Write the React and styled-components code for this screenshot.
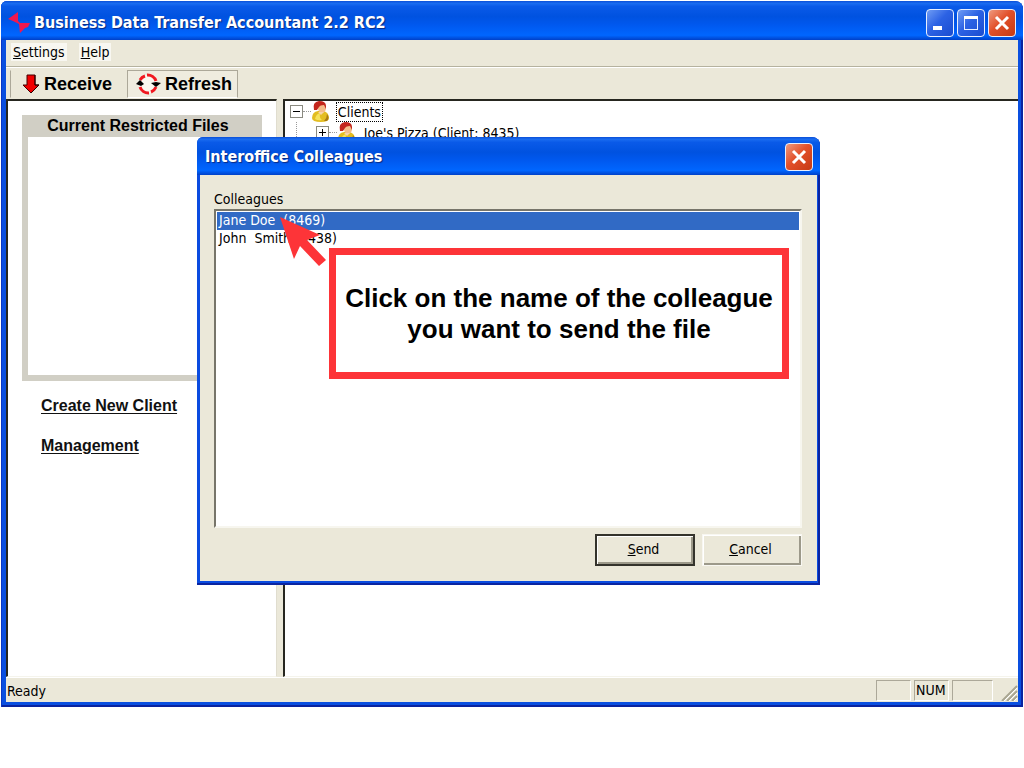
import React, { useState } from "react";
import styled, { createGlobalStyle } from "styled-components";

const colleagues = [
  { id: "8469", name: "Jane Doe\u00a0 (8469)" },
  { id: "8438", name: "John\u00a0 Smith (8438)" },
];

function Logo() {
  return (
    <svg width="22" height="22" viewBox="0 0 22 22" aria-hidden="true">
      <path d="M0 7 L10 0 V9 L12 11 H22 L20 15 L17 16 L12 21 L11 12 L9 11 L5 9 Z" fill="#f0184f" />
    </svg>
  );
}

function CloseIcon() {
  return (
    <svg width="16" height="16" viewBox="0 0 16 16" aria-hidden="true">
      <path d="M2 2 L14 14 M14 2 L2 14" stroke="#fff" strokeWidth="3" />
    </svg>
  );
}

function MinimizeIcon() {
  return (
    <svg width="16" height="16" viewBox="0 0 16 16" aria-hidden="true">
      <rect x="1" y="11" width="9" height="4" fill="#fff" />
    </svg>
  );
}

function MaximizeIcon() {
  return (
    <svg width="16" height="16" viewBox="0 0 16 16" aria-hidden="true">
      <rect x="1.5" y="1.5" width="13" height="13" fill="none" stroke="#e8f0ff" strokeWidth="1" />
      <rect x="1" y="1" width="14" height="3" fill="#fff" />
    </svg>
  );
}

function ReceiveIcon() {
  return (
    <svg width="18" height="22" viewBox="0 0 18 22" aria-hidden="true">
      <path d="M5 2 H13 V12 H17 L9 20 L1 12 H5 Z" fill="#f00000" stroke="#400" strokeWidth="1" />
      <path d="M13 2 V12 H17 L9 20" fill="none" stroke="#200" strokeWidth="1" />
    </svg>
  );
}

function RefreshIcon() {
  return (
    <svg width="25" height="22" viewBox="0 0 25 22" aria-hidden="true">
      <circle cx="12" cy="11" r="9" fill="#faf8f0" />
      <path
        d="M4 7 A9 9 0 0 1 9 3 M11 2 A9 9 0 0 1 20 8 M20 14 A9 9 0 0 1 15 19 M13 20 A9 9 0 0 1 4 14"
        fill="none"
        stroke="#f01820"
        strokeWidth="3"
      />
      <path d="M0 11 L4 7 L8 11 L5 13 Z" fill="#000" />
      <path d="M15 10 L20 9 L25 10 L20 14 Z" fill="#000" />
    </svg>
  );
}

function PersonIcon() {
  return (
    <svg width="19" height="21" viewBox="0 0 19 21" aria-hidden="true">
      <path d="M1 17 Q1 11 7 10 L13 10 Q18 12 18 17 Q18 21 10 21 Q1 21 1 17 Z" fill="#e3bd21" />
      <path d="M4 18 Q5 13 9 12 Q8 17 11 19 Q7 20 4 18 Z" fill="#f6e25a" />
      <path d="M16 13 Q19 17 16 20 L13 20 Q16 17 16 13 Z" fill="#a97b12" />
      <ellipse cx="11" cy="7" rx="4" ry="5" fill="#f4bd8a" />
      <path d="M3 9 Q1 1 8 0 Q15 0 15 5 L15 8 L13 4 Q9 4 8 6 L6 9 Z" fill="#c3261c" />
      <path d="M7 11 L10 14 L13 11 Z" fill="#f7d3a8" />
    </svg>
  );
}

function Expander({ open, label }) {
  return (
    <ExpandButton type="button" aria-label={label}>
      <svg width="11" height="11" viewBox="0 0 11 11" aria-hidden="true">
        <path d={open ? "M2 5.5 H9" : "M2 5.5 H9 M5.5 2 V9"} stroke="#000" strokeWidth="1" />
      </svg>
    </ExpandButton>
  );
}

function Grip() {
  return (
    <svg width="18" height="16" viewBox="0 0 18 16" aria-hidden="true">
      <path d="M2 16 L17 1 M7 16 L17 6 M12 16 L17 11" stroke="#a9a692" strokeWidth="2" />
      <path d="M4 16 L17 3 M9 16 L17 8 M14 16 L17 13" stroke="#fff" strokeWidth="1" />
    </svg>
  );
}

function ColleagueDialog() {
  const [selected, setSelected] = useState("8469");

  return (
    <Dialog role="dialog" aria-labelledby="dialog-title">
      <DialogTitleBar>
        <Title as="h2" id="dialog-title">Interoffice Colleagues</Title>
        <CaptionButton type="button" $danger aria-label="Close dialog"><CloseIcon /></CaptionButton>
      </DialogTitleBar>
      <DialogBody>
        <label htmlFor="colleagues">Colleagues</label>
        <ListWrap>
          <List id="colleagues" size={2} value={selected} onChange={(e) => setSelected(e.target.value)}>
            {colleagues.map((c) => (
              <option key={c.id} value={c.id}>{c.name}</option>
            ))}
          </List>
          <Callout>Click on the name of the colleague you want to send the file</Callout>
          <Pointer width="50" height="54" viewBox="0 0 50 54" aria-hidden="true">
            <path d="M2 4 L42 22 L29 27 L48 47 L41 53 L22 33 L16 46 Z" fill="#fd3438" />
          </Pointer>
        </ListWrap>
        <Actions>
          <PushButton type="button" $primary><u>S</u>end</PushButton>
          <PushButton type="button"><u>C</u>ancel</PushButton>
        </Actions>
      </DialogBody>
    </Dialog>
  );
}

function App() {
  return (
    <>
      <GlobalStyle />
      <Window>
        <TitleBar>
          <Logo />
          <Title>Business Data Transfer Accountant 2.2 RC2</Title>
          <CaptionButtons>
            <CaptionButton type="button" aria-label="Minimize"><MinimizeIcon /></CaptionButton>
            <CaptionButton type="button" aria-label="Maximize"><MaximizeIcon /></CaptionButton>
            <CaptionButton type="button" $danger aria-label="Close"><CloseIcon /></CaptionButton>
          </CaptionButtons>
        </TitleBar>
        <Client>
          <MenuBar>
            <MenuItem type="button"><u>S</u>ettings</MenuItem>
            <MenuItem type="button"><u>H</u>elp</MenuItem>
          </MenuBar>
          <Toolbar>
            <ToolButton type="button"><ReceiveIcon />Receive</ToolButton>
            <ToolButton type="button" $pressed><RefreshIcon />Refresh</ToolButton>
          </Toolbar>
          <Panes>
            <Sidebar>
              <FilesBox>
                <FilesHeading>Current Restricted Files</FilesHeading>
                <FilesArea />
              </FilesBox>
              <SideLinks>
                <a href="#new-client">Create New Client</a>
                <a href="#management">Management</a>
              </SideLinks>
            </Sidebar>
            <TreePane>
              <TreeRow>
                <Expander open label="Collapse Clients" />
                <Branch />
                <PersonIcon />
                <TreeLabel $focused>Clients</TreeLabel>
              </TreeRow>
              <TreeRow>
                <Trunk />
                <Expander label="Expand Joe's Pizza" />
                <Branch />
                <PersonIcon />
                <TreeLabel>Joe's Pizza (Client: 8435)</TreeLabel>
              </TreeRow>
            </TreePane>
          </Panes>
          <StatusBar>
            <StatusText>Ready</StatusText>
            <StatusCell />
            <StatusCell>NUM</StatusCell>
            <StatusCell $wide />
            <GripArea><Grip /></GripArea>
          </StatusBar>
        </Client>
        <ColleagueDialog />
      </Window>
    </>
  );
}

const GlobalStyle = createGlobalStyle`
  * {
    box-sizing: border-box;
  }
  body {
    margin: 0;
    background: #fff;
    color: #000;
    font-family: "DejaVu Sans Condensed", "DejaVu Sans", sans-serif;
    font-size: 14px;
    line-height: 18px;
  }
  button, select {
    font: inherit;
    color: inherit;
  }
  svg {
    display: block;
    flex: none;
  }
`;

const Window = styled.div`
  position: relative;
  display: flex;
  flex-direction: column;
  height: calc(100vh - 62px);
  min-height: 600px;
  margin: 1px 1px 0;
  padding: 0 5px 5px;
  background: #0a4fe0;
  border-radius: 6px 8px 0 0;
  box-shadow: inset 1px 0 #0a36c4, inset -2px -2px #0a24a0;
`;

const TitleBar = styled.header`
  display: flex;
  align-items: center;
  gap: 4px;
  height: 39px;
  margin: 0 -5px;
  padding: 4px 7px 0;
  border-radius: 6px 8px 0 0;
  background: linear-gradient(#0a4fd8 0%, #1a6cf0 6%, #0a5ae8 14%, #0052e0 40%, #0058ee 60%, #0066ff 88%, #0040c8 100%);
`;

const Title = styled.h1`
  flex: 1;
  margin: 0;
  color: #fff;
  font-family: "DejaVu Sans Condensed", "DejaVu Sans", sans-serif;
  font-size: 16px;
  line-height: 22px;
  font-weight: bold;
  text-shadow: 1px 1px 1px #0a2a80;
  white-space: nowrap;
`;

const CaptionButtons = styled.div`
  display: flex;
  gap: 3px;
`;

const CaptionButton = styled.button`
  display: flex;
  align-items: center;
  justify-content: center;
  width: 28px;
  height: 28px;
  padding: 0;
  border: 1px solid #e8effe;
  border-radius: 4px;
  background: ${(p) =>
    p.$danger
      ? "linear-gradient(135deg, #ee9a80, #e2502a 45%, #c63a14)"
      : "linear-gradient(135deg, #6f9cf4, #2c62e4 45%, #1a4cd0)"};
`;

const Client = styled.div`
  flex: 1;
  display: flex;
  flex-direction: column;
  min-height: 0;
  background: #ebe8d9;
`;

const MenuBar = styled.nav`
  display: flex;
  gap: 12px;
  height: 27px;
  padding: 3px 5px;
  border-bottom: 1px solid #b5b29f;
`;

const MenuItem = styled.button`
  height: 18px;
  padding: 0 2px;
  border: 0;
  background: #f8f7f1;
`;

const Toolbar = styled.div`
  display: flex;
  height: 32px;
  padding: 2px 0 1px 4px;
  border-top: 1px solid #fff;
`;

const ToolButton = styled.button`
  display: flex;
  align-items: center;
  gap: 4px;
  padding: 0 ${(p) => (p.$pressed ? "5px" : "14px")} 0 ${(p) => (p.$pressed ? "8px" : "11px")};
  border: 1px solid;
  border-color: ${(p) => (p.$pressed ? "#aca899 #aca899 #fff #aca899" : "transparent transparent transparent #aca899")};
  background: ${(p) => (p.$pressed ? "#efecdf" : "transparent")};
  font-family: "Liberation Sans", Arial, sans-serif;
  font-size: 18px;
  font-weight: bold;
`;

const Panes = styled.main`
  flex: 1;
  display: grid;
  grid-template-columns: 7fr 19fr;
  gap: 6px;
  min-height: 0;
`;

const Pane = styled.section`
  background: #fff;
  border-top: 2px solid #26261f;
  border-left: 2px solid #26261f;
  border-bottom: 1px solid #f5f4ec;
`;

const Sidebar = styled(Pane)`
  padding: 14px 14px 0;
  border-right: 1px solid #e0ddcf;
`;

const TreePane = styled(Pane)`
  padding: 0 5px;
  overflow: hidden;
`;

const FilesBox = styled.div`
  display: flex;
  flex-direction: column;
  height: 266px;
  padding: 0 6px 6px;
  background: #d1cfc5;
`;

const FilesHeading = styled.h2`
  margin: 0;
  padding-right: 8px;
  font-family: "Liberation Sans", Arial, sans-serif;
  font-size: 16px;
  line-height: 22px;
  text-align: center;
  white-space: nowrap;
`;

const FilesArea = styled.div`
  flex: 1;
  background: #fff;
`;

const SideLinks = styled.nav`
  display: flex;
  flex-direction: column;
  align-items: flex-start;
  gap: 20px;
  padding: 15px 19px;
  font-family: "Liberation Sans", Arial, sans-serif;
  font-size: 16px;
  line-height: 20px;
  font-weight: bold;
  a {
    color: #111;
    text-underline-offset: 2px;
  }
`;

const TreeRow = styled.div`
  display: flex;
  align-items: center;
  height: 21px;
`;

const Trunk = styled.span`
  align-self: stretch;
  width: 20px;
  margin-left: 6px;
  border-left: 1px dotted #999;
`;

const ExpandButton = styled.button`
  width: 13px;
  height: 13px;
  padding: 0;
  border: 1px solid #8a8a80;
  background: #fff;
`;

const Branch = styled.span`
  width: 8px;
  border-top: 1px dotted #999;
`;

const TreeLabel = styled.span`
  margin-left: 6px;
  padding: 0 1px;
  border: 1px dotted ${(p) => (p.$focused ? "#000" : "transparent")};
  white-space: nowrap;
`;

const StatusBar = styled.footer`
  display: flex;
  align-items: flex-end;
  gap: 3px;
  height: 25px;
  padding-bottom: 1px;
  border-top: 1px solid #fff;
`;

const StatusText = styled.span`
  flex: 1;
  padding: 0 1px 1px;
`;

const StatusCell = styled.span`
  width: ${(p) => (p.$wide ? "41px" : "35px")};
  height: 21px;
  padding: 0 1px;
  border: 1px solid;
  border-color: #aca899 #fff #fff #aca899;
`;

const GripArea = styled.span`
  padding-left: 4px;
`;

const Dialog = styled.div`
  position: absolute;
  top: 136px;
  left: 196px;
  right: 203px;
  padding: 0 3px 4px;
  background: #0a4be0;
  border-radius: 6px 8px 0 0;
  box-shadow: inset -2px -2px #0a24a0;
`;

const DialogTitleBar = styled(TitleBar)`
  height: 38px;
  margin: 0 -3px;
  padding: 2px 7px 0 8px;
`;

const DialogBody = styled.div`
  padding: 15px 15px 15px 14px;
  background: #ebe8d9;
`;

const ListWrap = styled.div`
  position: relative;
  height: 319px;
  margin-top: 1px;
`;

const List = styled.select`
  display: block;
  width: 100%;
  height: 100%;
  padding: 1px;
  border: 2px solid;
  border-color: #77756a #f7f6ef #f7f6ef #77756a;
  border-radius: 0;
  outline: none;
  background: #fff;
  overflow: hidden;
  option {
    height: 18px;
    min-height: 18px;
    padding: 0 2px;
    line-height: 18px;
  }
  option:checked {
    background: #316ac5 linear-gradient(#316ac5, #316ac5);
    -webkit-text-fill-color: #fff;
  }
`;

const Callout = styled.p`
  position: absolute;
  top: 39px;
  left: 115px;
  right: 13px;
  display: flex;
  align-items: center;
  height: 131px;
  margin: 0;
  padding: 0 8px;
  border: 7px solid #fd3438;
  background: #fff;
  font-family: "Liberation Sans", Arial, sans-serif;
  font-size: 26px;
  line-height: 31px;
  font-weight: bold;
  text-align: center;
`;

const Pointer = styled.svg`
  position: absolute;
  top: 4px;
  left: 64px;
`;

const Actions = styled.div`
  display: flex;
  justify-content: flex-end;
  gap: 7px;
  margin-top: 6px;
`;

const PushButton = styled.button`
  width: 100px;
  height: 32px;
  padding: 0 3px 2px 0;
  border: ${(p) => (p.$primary ? "2px solid #34332c" : "1px solid #f8f7f1")};
  border-radius: 0;
  background: #ebe8d9;
  box-shadow: inset 1px 1px #fff, inset -2px -2px #9c998a;
`;

export default App;
